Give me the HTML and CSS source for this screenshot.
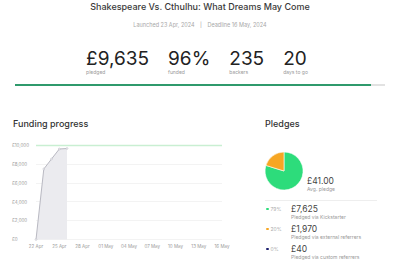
FILE: index.html
```html
<!DOCTYPE html>
<html lang="en">
<head>
    <meta charset="UTF-8">
    <meta name="viewport" content="width=device-width, initial-scale=1.0">
    <title>Shakespeare Vs. Cthulhu: What Dreams May Come</title>
    <link rel="stylesheet" href="styles.css">
</head>
<body>
    <header class="campaign">
        <h1 class="title">Shakespeare Vs. Cthulhu: What Dreams May Come</h1>
        <p class="dates">Launched 23 Apr, 2024 <span class="sep">|</span> Deadline 16 May, 2024</p>
        <div class="stats">
            <div class="stat">
                <div class="statValue">£9,635</div>
                <div class="statLabel">pledged</div>
            </div>
            <div class="stat">
                <div class="statValue">96%</div>
                <div class="statLabel">funded</div>
            </div>
            <div class="stat">
                <div class="statValue">235</div>
                <div class="statLabel">backers</div>
            </div>
            <div class="stat">
                <div class="statValue">20</div>
                <div class="statLabel">days to go</div>
            </div>
        </div>
        <div class="progress"><div class="progressFill" style="width: 96.3%"></div></div>
    </header>

    <main class="panels">
        <section class="funding">
            <h2 class="panelTitle">Funding progress</h2>
            <svg class="chart" width="220" height="114" viewBox="10 138 220 114">
                <g class="grid">
                    <line x1="36" y1="164.5" x2="222" y2="164.5"/>
                    <line x1="36" y1="183.5" x2="222" y2="183.5"/>
                    <line x1="36" y1="201.5" x2="222" y2="201.5"/>
                    <line x1="36" y1="220.5" x2="222" y2="220.5"/>
                    <line x1="36" y1="239.5" x2="222" y2="239.5"/>
                </g>
                <line class="goal" x1="36" y1="145.5" x2="222" y2="145.5"/>
                <path class="area" d="M36 239.5 L43.8 169 L51.5 159 L59.3 149 L67 148.5 L67 239.5 Z"/>
                <polyline class="trend" points="36,239.5 43.8,169 51.5,159 59.3,149 67,148.5"/>
                <g class="dots">
                    <circle cx="36" cy="239.5" r="0.9"/>
                    <circle cx="43.8" cy="169" r="0.9"/>
                    <circle cx="51.5" cy="159" r="0.9"/>
                    <circle cx="59.3" cy="149" r="0.9"/>
                    <circle cx="67" cy="148.5" r="0.9"/>
                </g>
                <g class="yLabels">
                    <text x="12" y="147">£10,000</text>
                    <text x="12" y="166">£8,000</text>
                    <text x="12" y="185">£6,000</text>
                    <text x="12" y="203.5">£4,000</text>
                    <text x="12" y="222">£2,000</text>
                    <text x="12" y="241">£0</text>
                </g>
                <g class="xLabels">
                    <text x="36" y="247.5">22 Apr</text>
                    <text x="59.3" y="247.5">25 Apr</text>
                    <text x="82.5" y="247.5">28 Apr</text>
                    <text x="105.8" y="247.5">01 May</text>
                    <text x="129" y="247.5">04 May</text>
                    <text x="152.3" y="247.5">07 May</text>
                    <text x="175.5" y="247.5">10 May</text>
                    <text x="198.8" y="247.5">13 May</text>
                    <text x="222" y="247.5">16 May</text>
                </g>
            </svg>
        </section>

        <section class="pledges">
            <h2 class="panelTitle">Pledges</h2>
            <div class="pieRow">
                <svg class="pie" width="38" height="38" viewBox="0 0 38 38">
                    <path class="sliceGreen" d="M19 19 L0.9 13.4 A19 19 0 1 0 19 0 Z"/>
                    <path class="sliceOrange" d="M19 19 L19 0 A19 19 0 0 0 0.9 13.4 Z"/>
                </svg>
                <div class="avg">
                    <div class="avgValue">£41.00</div>
                    <div class="avgLabel">Avg. pledge</div>
                </div>
            </div>
            <ul class="sources">
                <li class="source">
                    <div class="share"><span class="dot green"></span>79%</div>
                    <div>
                        <div class="amount">£7,625</div>
                        <div class="via">Pledged via Kickstarter</div>
                    </div>
                </li>
                <li class="source">
                    <div class="share"><span class="dot orange"></span>20%</div>
                    <div>
                        <div class="amount">£1,970</div>
                        <div class="via">Pledged via external referrers</div>
                    </div>
                </li>
                <li class="source">
                    <div class="share"><span class="dot navy"></span>0%</div>
                    <div>
                        <div class="amount">£40</div>
                        <div class="via">Pledged via custom referrers</div>
                    </div>
                </li>
            </ul>
        </section>
    </main>
</body>
</html>
```

FILE: styles.css
```css
* {
    margin: 0;
    padding: 0;
    box-sizing: border-box;
}
body {
    width: 400px;
    height: 266px;
    overflow: hidden;
    background-color: #fff;
    font-family: Inter, "Noto Sans", sans-serif;
    color: #333;
}
.campaign {
    text-align: center;
    padding-top: 1px;
}
.title {
    font-size: 9px;
    line-height: 12px;
    font-weight: 500;
    color: #3a3a3a;
}
.dates {
    margin-top: 8px;
    font-size: 5.5px;
    line-height: 8px;
    color: #a8a8a8;
}
.sep {
    margin: 0 4px;
    color: #999;
}
.stats {
    display: flex;
    justify-content: center;
    gap: 19px;
    margin-top: 20px;
    padding-right: 6px;
    text-align: left;
}
.statValue {
    font-size: 19px;
    line-height: 20px;
    color: #222;
}
.statLabel {
    font-size: 5px;
    line-height: 7px;
    color: #999;
}
.progress {
    margin: 8px 15px 0;
    height: 2px;
    background-color: #e2e2e2;
}
.progressFill {
    height: 100%;
    background-color: #2f9a6c;
}
.panels {
    display: flex;
    gap: 35px;
    margin-top: 32px;
}
.panelTitle {
    font-size: 9px;
    line-height: 12px;
    font-weight: 500;
    color: #333;
}
.funding {
    width: 230px;
}
.funding .panelTitle {
    padding-left: 13px;
}
.chart {
    display: block;
    margin-top: 8px;
    margin-left: 10px;
    overflow: hidden;
}
.grid line {
    stroke: #f0f0f0;
    stroke-width: 0.8;
}
.goal {
    stroke: #c9efd2;
    stroke-width: 1.4;
}
.area {
    fill: #ebebef;
}
.trend {
    fill: none;
    stroke: #b9b9c2;
    stroke-width: 1;
}
.dots circle {
    fill: #fff;
    stroke: #b9b9c2;
    stroke-width: 0.6;
}
.yLabels text, .xLabels text {
    font-family: Inter, sans-serif;
    font-size: 4.5px;
    fill: #9a9a9a;
}
.xLabels text {
    text-anchor: middle;
}
.pledges {
    width: 112px;
}
.pieRow {
    display: flex;
    align-items: flex-end;
    gap: 4px;
    margin-top: 22px;
}
.pie {
    display: block;
}
.sliceGreen {
    fill: #2ddc7b;
    stroke: #fff;
    stroke-width: 0.6;
}
.sliceOrange {
    fill: #f6a623;
    stroke: #fff;
    stroke-width: 0.6;
}
.avg {
    margin-bottom: -3px;
}
.avgValue {
    font-size: 8.5px;
    line-height: 10px;
    color: #444;
}
.avgLabel {
    font-size: 5px;
    line-height: 7px;
    color: #999;
}
.sources {
    list-style: none;
    margin-top: 10px;
    border-top: 1px solid #eee;
    padding-top: 3px;
}
.source {
    display: flex;
    margin-bottom: 3px;
}
.share {
    width: 26px;
    display: flex;
    align-items: center;
    gap: 2px;
    height: 10px;
    font-size: 5px;
    color: #aaa;
}
.dot {
    width: 2.5px;
    height: 2.5px;
    border-radius: 50%;
    margin-left: 1px;
}
.green {
    background-color: #2ddc7b;
}
.orange {
    background-color: #f6a623;
}
.navy {
    background-color: #1d1f6e;
}
.amount {
    font-size: 8.5px;
    line-height: 10px;
    color: #444;
}
.via {
    font-size: 5px;
    line-height: 7px;
    color: #999;
}
```
